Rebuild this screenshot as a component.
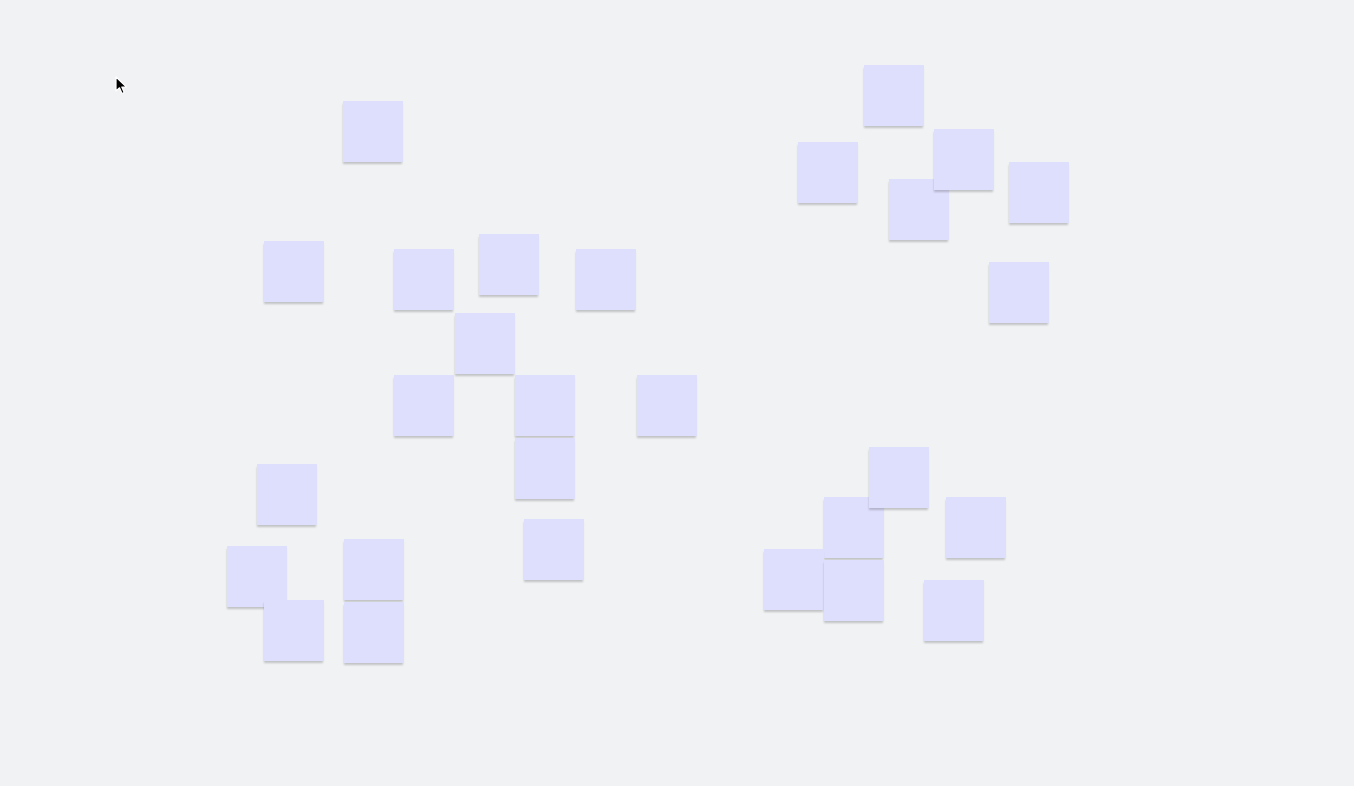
const notes: { id: number; x: number; y: number }[] = [
  { id: 1, x: 342, y: 101 },
  { id: 2, x: 263, y: 241 },
  { id: 3, x: 393, y: 249 },
  { id: 4, x: 478, y: 234 },
  { id: 5, x: 575, y: 249 },
  { id: 6, x: 454, y: 313 },
  { id: 7, x: 393, y: 375 },
  { id: 8, x: 514, y: 375 },
  { id: 9, x: 636, y: 375 },
  { id: 10, x: 514, y: 438 },
  { id: 11, x: 256, y: 464 },
  { id: 12, x: 523, y: 519 },
  { id: 13, x: 226, y: 546 },
  { id: 14, x: 343, y: 539 },
  { id: 15, x: 263, y: 600 },
  { id: 16, x: 343, y: 602 },
  { id: 17, x: 863, y: 65 },
  { id: 18, x: 797, y: 142 },
  { id: 20, x: 888, y: 179 },
  { id: 19, x: 933, y: 129 },
  { id: 21, x: 1008, y: 162 },
  { id: 22, x: 988, y: 262 },
  { id: 24, x: 823, y: 497 },
  { id: 23, x: 868, y: 447 },
  { id: 25, x: 945, y: 497 },
  { id: 26, x: 763, y: 549 },
  { id: 27, x: 823, y: 560 },
  { id: 28, x: 923, y: 580 },
];

const Cursor = () => (
  <svg width="14" height="20" viewBox="0 0 14 20" className="absolute left-[115px] top-[76px]">
    <path
      d="M1 1 L1 15 L4.5 11.8 L7 17.5 L9.2 16.5 L6.8 11 L11.5 11 Z"
      fill="#000"
      stroke="#fff"
      strokeWidth="1.2"
      strokeLinejoin="round"
    />
  </svg>
);

// slight tilt on the shadow, like a paper note lifting at the bottom
const StickyNote = ({ x, y }: { x: number; y: number }) => (
  <div
    className="absolute w-[60px] h-[61px] bg-[#dedefd] shadow-[-1px_2px_2px_-0.5px_rgba(0,0,0,0.2)]"
    style={{ left: x + 1, top: y }}
  />
);

export default function App() {
  return (
    <div className="relative w-full h-screen overflow-hidden bg-[#f1f2f4]">
      {notes.map((n) => (
        <StickyNote key={n.id} x={n.x} y={n.y} />
      ))}
      <Cursor />
    </div>
  );
}
